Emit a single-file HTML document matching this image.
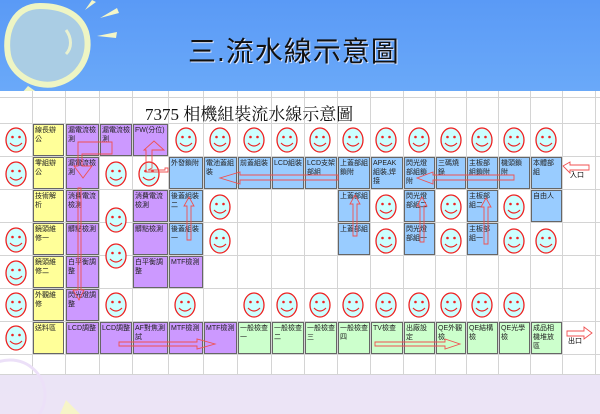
<!DOCTYPE html>
<html><head><meta charset="utf-8"><style>
*{margin:0;padding:0;box-sizing:border-box}
body{width:600px;height:414px;position:relative;overflow:hidden;background:linear-gradient(#e0e0f2,#ece4f6);font-family:"Liberation Sans","Noto Sans CJK TC",sans-serif}
#hdr{position:absolute;left:0;top:0;width:600px;height:91px;background:linear-gradient(#5a9af6,#6aa9f9)}
#ttl{position:absolute;left:188px;top:30px;font-size:28px;color:#111;letter-spacing:1px;text-shadow:1px 1px 0 #dfe8ff;font-family:"Liberation Sans","Noto Sans CJK TC",sans-serif}
#sheet{position:absolute;left:0;top:91px;width:600px;height:284px;background:#fff}
#sub{position:absolute;left:145px;top:100px;font-size:17px;font-family:"Liberation Serif","Noto Serif CJK SC",serif;color:#111}
.c{position:absolute;height:32px;border:1px solid #666;font-size:7px;line-height:9px;padding:1px;color:#222;overflow:hidden;font-family:"Liberation Sans","Noto Sans CJK TC",sans-serif}
.y{background:#ffff99}.p{background:#cc99ff}.b{background:#99ccff}.g{background:#ccffcc}
</style></head><body>
<div id="hdr">
<svg width="120" height="91" style="position:absolute;left:0;top:0">
<path d="M40 6 C15 6 4 30 8 55 C12 75 35 88 55 84 C80 78 92 55 86 32 C80 14 62 6 40 6Z" fill="#aacde4" stroke="#eef5c4" stroke-width="6"/>
<path d="M28 86 L22 93 L38 93 Z" fill="#eef5c4"/>
<path d="M85 10 L92 0 L96 2Z M100 18 L117 8 L119 13Z M97 36 L117 32 L116 38Z" fill="#f4f6c8"/>
<path d="M66 30 C72 38 72 48 66 54" stroke="#e8f1d0" stroke-width="3" fill="none"/>
</svg>
<div id="ttl">三.流水線示意圖</div>
</div>
<div id="sheet"></div>
<svg width="600" height="414" style="position:absolute;left:0;top:0">
<g stroke="#d4d4d4" stroke-width="1">
<line x1="0" y1="97.5" x2="600" y2="97.5"/><line x1="0" y1="123.5" x2="600" y2="123.5"/><line x1="0" y1="156.5" x2="600" y2="156.5"/><line x1="0" y1="189.5" x2="600" y2="189.5"/><line x1="0" y1="222.5" x2="600" y2="222.5"/><line x1="0" y1="255.5" x2="600" y2="255.5"/><line x1="0" y1="288.5" x2="600" y2="288.5"/><line x1="0" y1="321.5" x2="600" y2="321.5"/><line x1="0" y1="354.5" x2="600" y2="354.5"/><line x1="0" y1="374.5" x2="600" y2="374.5"/>
<line x1="32.5" y1="91" x2="32.5" y2="375"/><line x1="65.5" y1="91" x2="65.5" y2="375"/><line x1="99.5" y1="91" x2="99.5" y2="375"/><line x1="132.5" y1="91" x2="132.5" y2="375"/><line x1="168.5" y1="91" x2="168.5" y2="375"/><line x1="203.5" y1="91" x2="203.5" y2="375"/><line x1="237.5" y1="91" x2="237.5" y2="375"/><line x1="271.5" y1="91" x2="271.5" y2="375"/><line x1="304.5" y1="91" x2="304.5" y2="375"/><line x1="337.5" y1="91" x2="337.5" y2="375"/><line x1="370.5" y1="91" x2="370.5" y2="375"/><line x1="403.5" y1="91" x2="403.5" y2="375"/><line x1="435.5" y1="91" x2="435.5" y2="375"/><line x1="466.5" y1="91" x2="466.5" y2="375"/><line x1="498.5" y1="91" x2="498.5" y2="375"/><line x1="530.5" y1="91" x2="530.5" y2="375"/><line x1="562.5" y1="91" x2="562.5" y2="375"/><line x1="595.5" y1="91" x2="595.5" y2="375"/>
</g>
<defs><g id="sm"><ellipse cx="12" cy="14" rx="10" ry="12" fill="#ccffff" stroke="#ee2222" stroke-width="1.3"/><circle cx="8.5" cy="11" r="1.3" fill="#e22"/><circle cx="15.5" cy="11" r="1.3" fill="#e22"/><path d="M6 17 Q12 23 18 17" fill="none" stroke="#e22" stroke-width="1.2"/></g></defs>
</svg>
<div id="sub">7375 相機組裝流水線示意圖</div>

<div class="c y" style="left:33px;top:124px;width:31px">線長辦公</div>
<div class="c p" style="left:66px;top:124px;width:33px">漏電流檢測</div>
<div class="c p" style="left:100px;top:124px;width:32px">漏電流檢測</div>
<div class="c p" style="left:133px;top:124px;width:35px">FW(分位)</div>
<div class="c y" style="left:33px;top:157px;width:31px">零組辦公</div>
<div class="c p" style="left:66px;top:157px;width:33px">漏電流檢測</div>
<div class="c b" style="left:169px;top:157px;width:34px">外發鎖附</div>
<div class="c b" style="left:204px;top:157px;width:33px">電池蓋組裝</div>
<div class="c b" style="left:238px;top:157px;width:33px">前蓋組裝</div>
<div class="c b" style="left:272px;top:157px;width:32px">LCD組裝</div>
<div class="c b" style="left:305px;top:157px;width:32px">LCD支架部組</div>
<div class="c b" style="left:338px;top:157px;width:32px">上蓋部組鎖附</div>
<div class="c b" style="left:371px;top:157px;width:32px">APEAK 組裝,焊接</div>
<div class="c b" style="left:404px;top:157px;width:31px">閃光燈部組鎖附</div>
<div class="c b" style="left:436px;top:157px;width:30px">三碼燒錄</div>
<div class="c b" style="left:467px;top:157px;width:31px">主板部組鎖附</div>
<div class="c b" style="left:499px;top:157px;width:31px">機頭鎖附</div>
<div class="c b" style="left:531px;top:157px;width:31px">本體部組</div>
<div class="c y" style="left:33px;top:190px;width:31px">技術解析</div>
<div class="c p" style="left:66px;top:190px;width:33px">消費電流檢測</div>
<div class="c p" style="left:133px;top:190px;width:35px">消費電流檢測</div>
<div class="c b" style="left:169px;top:190px;width:34px">後蓋組裝二</div>
<div class="c b" style="left:338px;top:190px;width:32px">上蓋部組</div>
<div class="c b" style="left:404px;top:190px;width:31px">閃光燈部組二</div>
<div class="c b" style="left:467px;top:190px;width:31px">主板部組二</div>
<div class="c b" style="left:531px;top:190px;width:31px">自由人</div>
<div class="c y" style="left:33px;top:223px;width:31px">鏡頭維修一</div>
<div class="c p" style="left:66px;top:223px;width:33px">髒點檢測</div>
<div class="c p" style="left:133px;top:223px;width:35px">髒點檢測</div>
<div class="c b" style="left:169px;top:223px;width:34px">後蓋組裝一</div>
<div class="c b" style="left:338px;top:223px;width:32px">上蓋部組</div>
<div class="c b" style="left:404px;top:223px;width:31px">閃光燈部組一</div>
<div class="c b" style="left:467px;top:223px;width:31px">主板部組一</div>
<div class="c y" style="left:33px;top:256px;width:31px">鏡頭維修二</div>
<div class="c p" style="left:66px;top:256px;width:33px">白平衡調整</div>
<div class="c p" style="left:133px;top:256px;width:35px">白平衡調整</div>
<div class="c p" style="left:169px;top:256px;width:34px">MTF檢測</div>
<div class="c y" style="left:33px;top:289px;width:31px">外觀維修</div>
<div class="c p" style="left:66px;top:289px;width:33px">閃光燈調整</div>
<div class="c y" style="left:33px;top:322px;width:31px">送料區</div>
<div class="c p" style="left:66px;top:322px;width:33px">LCD調整</div>
<div class="c p" style="left:100px;top:322px;width:32px">LCD調整</div>
<div class="c p" style="left:133px;top:322px;width:35px">AF對焦測試</div>
<div class="c p" style="left:169px;top:322px;width:34px">MTF檢測</div>
<div class="c p" style="left:204px;top:322px;width:33px">MTF檢測</div>
<div class="c g" style="left:238px;top:322px;width:33px">一般檢查一</div>
<div class="c g" style="left:272px;top:322px;width:32px">一般檢查二</div>
<div class="c g" style="left:305px;top:322px;width:32px">一般檢查三</div>
<div class="c g" style="left:338px;top:322px;width:32px">一般檢查四</div>
<div class="c g" style="left:371px;top:322px;width:32px">TV檢查</div>
<div class="c g" style="left:404px;top:322px;width:31px">出廠設定</div>
<div class="c g" style="left:436px;top:322px;width:30px">QE外觀檢</div>
<div class="c g" style="left:467px;top:322px;width:31px">QE結構檢</div>
<div class="c g" style="left:499px;top:322px;width:31px">QE光學檢</div>
<div class="c g" style="left:531px;top:322px;width:31px">成品相機堆放區</div>
<div style="position:absolute;left:570px;top:170px;font-size:7px">入口</div>
<div style="position:absolute;left:568px;top:336px;font-size:7px">出口</div>

<svg width="600" height="414" style="position:absolute;left:0;top:0">
<use href="#sm" x="4" y="126"/><use href="#sm" x="174" y="126"/><use href="#sm" x="208" y="126"/><use href="#sm" x="242" y="126"/><use href="#sm" x="275" y="126"/><use href="#sm" x="308" y="126"/><use href="#sm" x="341" y="126"/><use href="#sm" x="374" y="126"/><use href="#sm" x="407" y="126"/><use href="#sm" x="439" y="126"/><use href="#sm" x="470" y="126"/><use href="#sm" x="502" y="126"/><use href="#sm" x="534" y="126"/>
<use href="#sm" x="4" y="160"/><use href="#sm" x="104" y="160"/><use href="#sm" x="137" y="160"/>
<use href="#sm" x="104" y="206"/><use href="#sm" x="208" y="193"/><use href="#sm" x="374" y="193"/><use href="#sm" x="439" y="193"/><use href="#sm" x="502" y="193"/>
<use href="#sm" x="4" y="226"/><use href="#sm" x="104" y="242"/><use href="#sm" x="208" y="227"/><use href="#sm" x="374" y="227"/><use href="#sm" x="439" y="227"/><use href="#sm" x="502" y="227"/><use href="#sm" x="534" y="227"/>
<use href="#sm" x="4" y="259"/>
<use href="#sm" x="4" y="291"/><use href="#sm" x="104" y="291"/><use href="#sm" x="173" y="291"/><use href="#sm" x="242" y="291"/><use href="#sm" x="275" y="291"/><use href="#sm" x="308" y="291"/><use href="#sm" x="341" y="291"/><use href="#sm" x="374" y="291"/><use href="#sm" x="407" y="291"/><use href="#sm" x="439" y="291"/><use href="#sm" x="470" y="291"/><use href="#sm" x="502" y="291"/>
<use href="#sm" x="4" y="324"/>
<g fill="none" stroke="#f05050" stroke-width="0.9">
<polygon points="563,166 570,162 570,165 589,165 589,170 570,170 570,173"/>
<polygon points="567,331 584,331 584,327 592,333 584,339 584,336 567,336"/>
<polygon points="119,342 197,342 197,339 215,344 197,349 197,346 119,346"/>
<polygon points="375,342 445,342 445,339 460,344 445,349 445,346 375,346"/>
<polygon points="338,175 240,175 240,172 220,178 240,184 240,180 338,180"/>
<polygon points="514,175 433,175 433,172 417,178 433,184 433,180 514,180"/>
<polygon points="187,240 187,206 184,206 189,197 194,206 191,206 191,240"/>
<polygon points="353,236 353,204 350,204 355,195 360,204 357,204 357,236"/>
<polygon points="420,242 420,206 417,206 422,197 427,206 424,206 424,242"/>
<polygon points="484,244 484,207 481,207 486,198 491,207 488,207 488,244"/>
<polygon points="78,142 112,142 112,154 82,154 82,166 92,166 83,178 74,166 78,166"/>
<polygon points="148,170 165,170 165,168 168,168 168,172 146,172 146,150 144,150 154,141 164,150 152,150 152,168"/>
<polygon points="78,188 78,290 73,290 79,300 84,290 81,290 81,188"/>
</g>
<path d="M60 414 L66 400 L80 414Z" fill="#f6f4c8"/>
<ellipse cx="10" cy="395" rx="35" ry="35" fill="none" stroke="#ece0f8" stroke-width="3"/>
</svg>
</body></html>
